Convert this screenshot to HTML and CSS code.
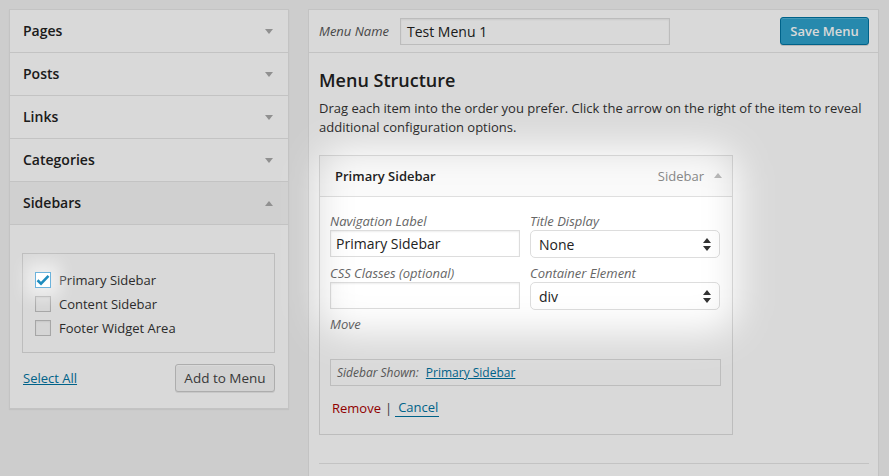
FILE: index.html
```html
<!DOCTYPE html>
<html lang="en">
<head>
<meta charset="utf-8">
<title>Menus</title>
<link rel="stylesheet" href="styles.css">
</head>
<body>
<div class="wrap">
  <div class="left">
    <div class="acc-row"><h3>Pages</h3><span class="tri down"></span></div>
    <div class="acc-row"><h3>Posts</h3><span class="tri down"></span></div>
    <div class="acc-row"><h3>Links</h3><span class="tri down"></span></div>
    <div class="acc-row"><h3>Categories</h3><span class="tri down"></span></div>
    <div class="acc-row open"><h3>Sidebars</h3><span class="tri up"></span></div>
    <div class="acc-body">
      <div class="checklist">
        <div class="check-row"><span class="cb checked"><svg width="14" height="12" viewBox="0 0 14 12"><path d="M1.5 6.2 L5 9.6 L12.5 1.8" fill="none" stroke="#1e8cbe" stroke-width="2.6"/></svg></span><span>Primary Sidebar</span></div>
        <div class="check-row"><span class="cb"></span><span>Content Sidebar</span></div>
        <div class="check-row"><span class="cb"></span><span>Footer Widget Area</span></div>
      </div>
      <div class="actions">
        <a class="link" href="#">Select All</a>
        <button class="btn">Add to Menu</button>
      </div>
    </div>
  </div>

  <div class="right">
    <div class="menu-header">
      <label class="menu-name-label">Menu Name</label>
      <div class="text-input name-input">Test Menu 1</div>
      <button class="btn primary">Save Menu</button>
    </div>
    <div class="menu-body">
      <h2>Menu Structure</h2>
      <p class="desc">Drag each item into the order you prefer. Click the arrow on the right of the item to reveal additional configuration options.</p>
      <div class="item">
        <div class="item-head">
          <span class="item-title">Primary Sidebar</span>
          <span class="item-type">Sidebar</span>
          <span class="tri up small"></span>
        </div>
        <div class="item-body">
          <div class="fields">
            <div class="field">
              <div class="flabel">Navigation Label</div>
              <div class="text-input">Primary Sidebar</div>
            </div>
            <div class="field">
              <div class="flabel">Title Display</div>
              <div class="select"><span>None</span><svg width="8" height="13" viewBox="0 0 8 13"><path d="M4 0 L8 5 L0 5 Z M0 8 L8 8 L4 13 Z" fill="#333"/></svg></div>
            </div>
            <div class="field">
              <div class="flabel">CSS Classes (optional)</div>
              <div class="text-input"></div>
            </div>
            <div class="field">
              <div class="flabel">Container Element</div>
              <div class="select"><span>div</span><svg width="8" height="13" viewBox="0 0 8 13"><path d="M4 0 L8 5 L0 5 Z M0 8 L8 8 L4 13 Z" fill="#333"/></svg></div>
            </div>
          </div>
          <div class="flabel move">Move</div>
          <div class="shown"><span class="shown-label">Sidebar Shown:</span><a class="link" href="#">Primary Sidebar</a></div>
          <div class="item-actions"><a class="remove" href="#">Remove</a><span class="sep">|</span><a class="cancel" href="#">Cancel</a></div>
        </div>
      </div>
      <div class="divider"></div>
    </div>
  </div>
</div>
<div class="dim"><div class="spot"></div></div>
</body>
</html>
```
FILE: styles.css
```css
* { box-sizing: border-box; }
html, body { margin: 0; padding: 0; }
body {
  background: #f1f1f1;
  font-family: "Open Sans", "DejaVu Sans", sans-serif;
  font-size: 13px;
  color: #333;
  width: 889px;
  height: 476px;
  overflow: hidden;
  position: relative;
}
.wrap {
  display: flex;
  align-items: flex-start;
  padding: 9px 0 0 9px;
  gap: 19px;
}

/* left accordion */
.left {
  width: 280px;
  background: #fff;
  border: 1px solid #e5e5e5;
  box-shadow: 0 1px 1px rgba(0,0,0,.05);
}
.acc-row {
  height: 43px;
  border-bottom: 1px solid #e5e5e5;
  display: flex;
  align-items: center;
  justify-content: space-between;
  padding: 0 15px 0 13px;
}
.acc-row.open { background: #f5f5f5; }
.acc-row h3 {
  margin: 0 0 1px;
  font-size: 14px;
  font-weight: 600;
  color: #222;
}
.tri {
  width: 0; height: 0;
  border-left: 4px solid transparent;
  border-right: 4px solid transparent;
}
.tri.down { border-top: 5px solid #aaa; }
.tri.up { border-bottom: 5px solid #aaa; }

.acc-body { padding: 28px 13px 16px 12px; }
.checklist {
  height: 100px;
  border: 1px solid #dedede;
  padding: 14px 12px 0 12px;
}
.check-row {
  height: 24px;
  display: flex;
  align-items: center;
  gap: 8px;
  font-size: 13px;
  color: #333;
}
.cb {
  width: 16px; height: 16px;
  border: 1px solid #c3c3c3;
  background: #fbfbfb;
  display: flex;
  align-items: center;
  justify-content: center;
  box-shadow: inset 0 1px 2px rgba(0,0,0,.07);
}
.cb.checked {
  position: relative;
  z-index: 11;
  border-color: #6cb3dc;
  background: #fff;
  box-shadow: 0 0 16px 9px rgba(255,255,255,.6);
}
.actions {
  margin-top: 11px;
  display: flex;
  align-items: center;
  justify-content: space-between;
  padding-left: 1px;
}
.link { color: #0074a2; text-decoration: underline; }
.btn {
  font-family: inherit;
  font-size: 13px;
  height: 28px;
  padding: 0 10px;
  border-radius: 3px;
  border: 1px solid #ccc;
  background: #f7f7f7;
  color: #444;
  white-space: nowrap;
  box-shadow: inset 0 1px 0 #fff, 0 1px 0 rgba(0,0,0,.08);
}
.actions .btn { width: 100px; padding: 0; font-size: 13.5px; }

/* right panel */
.right {
  width: 571px;
  height: 467px;
  background: #fff;
  border: 1px solid #e5e5e5;
  border-bottom: 0;
}
.menu-header {
  height: 43px;
  border-bottom: 1px solid #e5e5e5;
  display: flex;
  align-items: center;
  padding: 0 9px 0 10px;
}
.menu-name-label {
  font-style: italic;
  color: #555;
  width: 81px;
}
.text-input {
  height: 27px;
  border: 1px solid #ddd;
  background: #fff;
  box-shadow: inset 0 1px 2px rgba(0,0,0,.07);
  font-size: 14px;
  line-height: 25px;
  padding: 0 5px;
  color: #222;
}
.name-input { width: 270px; padding-left: 6px; margin-top: 1px; }
.btn.primary {
  margin-left: auto;
  width: 89px;
  height: 28px;
  padding: 0;
  background: #2ea2cc;
  border-color: #0074a2;
  color: #fff;
  font-weight: 600;
  box-shadow: inset 0 1px 0 rgba(120,200,230,.5), 0 1px 0 rgba(0,0,0,.15);
}
.menu-body { padding: 0 10px; }
.menu-body h2 {
  margin: 15px 0 0;
  font-size: 18px;
  line-height: 24px;
  font-weight: 600;
  color: #222;
}
.desc {
  margin: 7px 0 0;
  font-size: 13px;
  line-height: 19px;
  color: #333;
}
.item {
  margin-top: 18px;
  width: 414px;
  border: 1px solid #dfdfdf;
  background: #fff;
}
.item-head {
  height: 41px;
  border-bottom: 1px solid #dfdfdf;
  background: #fafafa;
  display: flex;
  align-items: center;
  padding: 0 10px 0 15px;
}
.item-title { font-weight: 600; color: #222; }
.item-type { margin-left: auto; color: #888; margin-right: 10px; }
.tri.small { border-bottom-color: #bbb; margin-top: -2px; }
.item-body { padding: 15px 11px 17px 10px; }
.fields {
  display: grid;
  grid-template-columns: 190px 190px;
  column-gap: 10px;
  row-gap: 6px;
}
.flabel {
  font-style: italic;
  color: #666;
  line-height: 18px;
}
.select {
  height: 28px;
  border: 1px solid #ddd;
  border-radius: 5px;
  background: #fff;
  display: flex;
  align-items: center;
  justify-content: space-between;
  padding: 0 8px 0 8px;
  font-size: 14px;
  color: #222;
}
.move { margin-top: 5px; }
.shown {
  margin-top: 26px;
  height: 27px;
  border: 1px solid #dedede;
  display: flex;
  align-items: center;
  padding: 0 6px;
  gap: 7px;
  font-size: 12px;
}
.shown-label { font-style: italic; color: #666; }
.item-actions {
  margin-top: 12px;
  line-height: 18px;
  display: flex;
  align-items: center;
  padding-left: 2px;
}
.remove { color: #a00; text-decoration: none; }
.sep { color: #444; margin: 0 3px 0 4px; }
.cancel {
  color: #0074a2;
  text-decoration: none;
  border-bottom: 1px solid #0074a2;
  padding: 0 1px 0 3px;
}
.divider {
  margin-top: 28px;
  height: 1px;
  background: #e5e5e5;
  width: 550px;
}

/* spotlight dim overlay */
.dim {
  position: absolute;
  left: 0; top: 0;
  width: 889px; height: 476px;
  overflow: hidden;
  pointer-events: none;
  z-index: 10;
}
.spot {
  position: absolute;
  left: 318px; top: 148px;
  width: 420px; height: 185px;
  border-radius: 30px;
  box-shadow: 0 0 0 1600px rgba(0,0,0,.15);
  filter: blur(18px);
}
```
